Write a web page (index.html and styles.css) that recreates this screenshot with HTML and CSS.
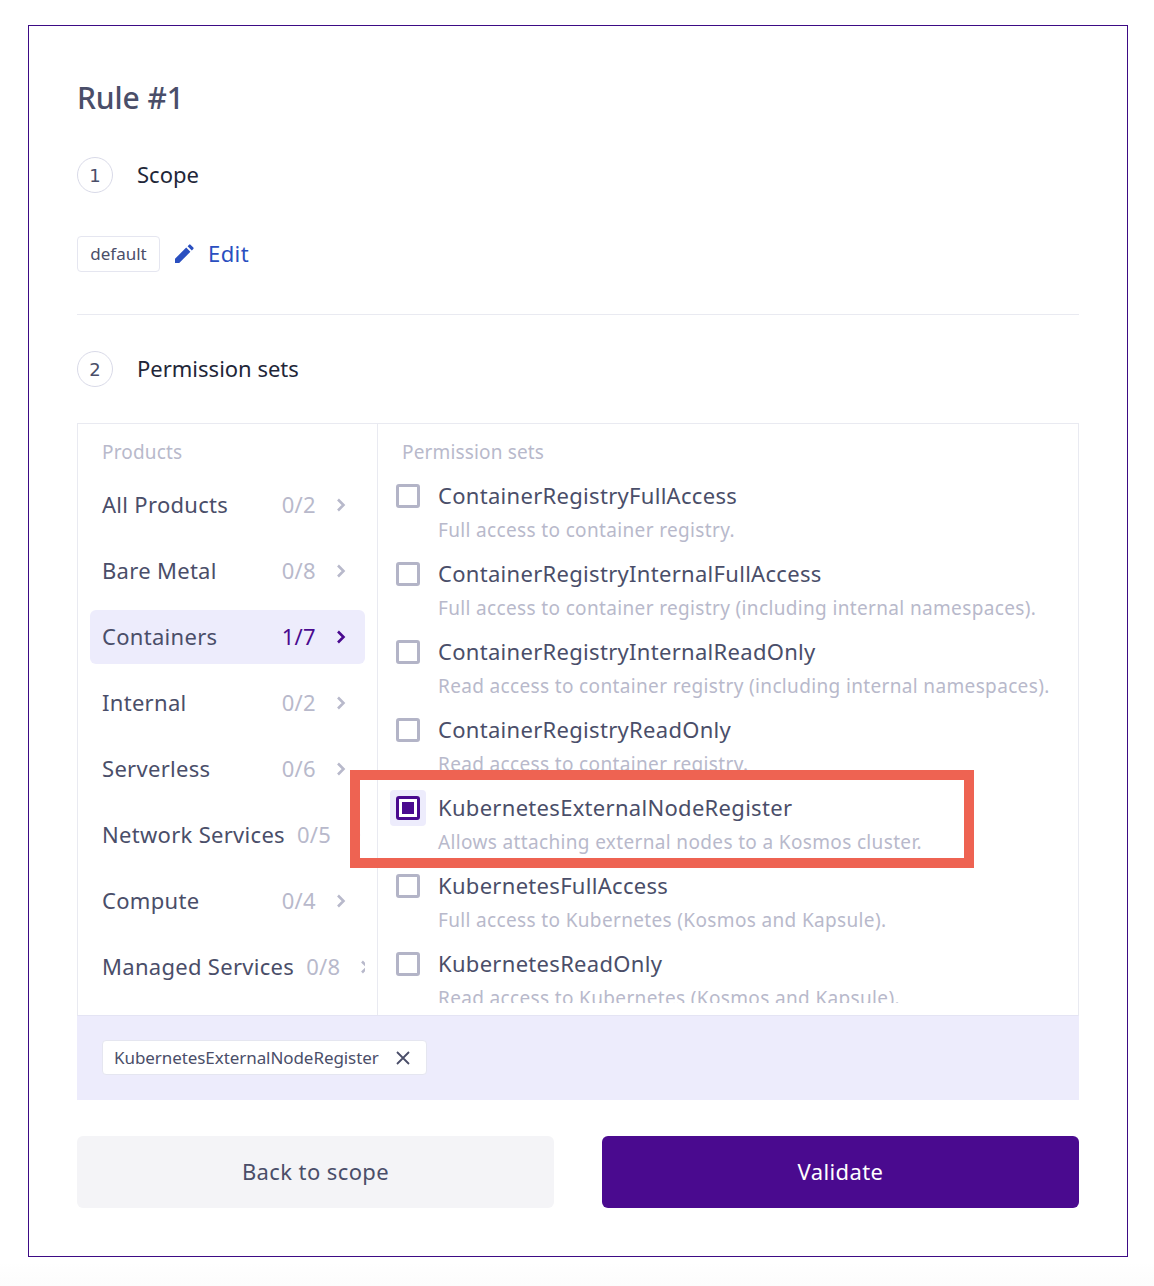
FILE: index.html
```html
<!DOCTYPE html>
<html lang="en">
  <head>
    <meta charset="UTF-8" />
    <title>Rule #1</title>
    <link rel="stylesheet" href="styles.css">
  </head>
  <body>
    <div class="rule-card">
      <h2 class="rule-title">Rule #1</h2>

      <div class="step step-first">
        <span class="step-num">1</span>
        <span class="step-label">Scope</span>
      </div>
      <div class="scope-row">
        <span class="tag">default</span>
        <a class="edit-link">
          <svg class="edit-icon" viewBox="0 0 20 20" width="20" height="20"><path fill="#2a4fc0" d="M1 19v-4.2L12.2 3.6l4.2 4.2L5.2 19H1zM13.6 2.2l1.5-1.5a1 1 0 0 1 1.4 0l2.8 2.8a1 1 0 0 1 0 1.4l-1.5 1.5-4.2-4.2z"/></svg>
          Edit
        </a>
      </div>

      <hr class="divider" />

      <div class="step">
        <span class="step-num">2</span>
        <span class="step-label">Permission sets</span>
      </div>

      <div class="picker">
        <div class="picker-cols">
          <div class="products">
            <div class="col-title">Products</div>
            <div class="product"><span class="product-name">All Products</span><span class="count">0/2</span><svg class="chev" viewBox="0 0 10 14" width="10" height="14"><path d="M2 1.5l5.5 5.5-5.5 5.5"/></svg></div>
            <div class="product"><span class="product-name">Bare Metal</span><span class="count">0/8</span><svg class="chev" viewBox="0 0 10 14" width="10" height="14"><path d="M2 1.5l5.5 5.5-5.5 5.5"/></svg></div>
            <div class="product active"><span class="product-name">Containers</span><span class="count">1/7</span><svg class="chev" viewBox="0 0 10 14" width="10" height="14"><path d="M2 1.5l5.5 5.5-5.5 5.5"/></svg></div>
            <div class="product"><span class="product-name">Internal</span><span class="count">0/2</span><svg class="chev" viewBox="0 0 10 14" width="10" height="14"><path d="M2 1.5l5.5 5.5-5.5 5.5"/></svg></div>
            <div class="product"><span class="product-name">Serverless</span><span class="count">0/6</span><svg class="chev" viewBox="0 0 10 14" width="10" height="14"><path d="M2 1.5l5.5 5.5-5.5 5.5"/></svg></div>
            <div class="product"><span class="product-name">Network Services</span><span class="count">0/5</span><svg class="chev" viewBox="0 0 10 14" width="10" height="14"><path d="M2 1.5l5.5 5.5-5.5 5.5"/></svg></div>
            <div class="product"><span class="product-name">Compute</span><span class="count">0/4</span><svg class="chev" viewBox="0 0 10 14" width="10" height="14"><path d="M2 1.5l5.5 5.5-5.5 5.5"/></svg></div>
            <div class="product"><span class="product-name">Managed Services</span><span class="count">0/8</span><svg class="chev" viewBox="0 0 10 14" width="10" height="14"><path d="M2 1.5l5.5 5.5-5.5 5.5"/></svg></div>
          </div>

          <div class="perms">
            <div class="col-title">Permission sets</div>
            <div class="perm-list">
              <div class="perm">
                <span class="check"></span>
                <div><div class="perm-name">ContainerRegistryFullAccess</div><div class="perm-desc">Full access to container registry.</div></div>
              </div>
              <div class="perm">
                <span class="check"></span>
                <div><div class="perm-name">ContainerRegistryInternalFullAccess</div><div class="perm-desc">Full access to container registry (including internal namespaces).</div></div>
              </div>
              <div class="perm">
                <span class="check"></span>
                <div><div class="perm-name">ContainerRegistryInternalReadOnly</div><div class="perm-desc">Read access to container registry (including internal namespaces).</div></div>
              </div>
              <div class="perm">
                <span class="check"></span>
                <div><div class="perm-name">ContainerRegistryReadOnly</div><div class="perm-desc">Read access to container registry.</div></div>
              </div>
              <div class="perm">
                <span class="check-halo"><span class="check checked"></span></span>
                <div><div class="perm-name">KubernetesExternalNodeRegister</div><div class="perm-desc">Allows attaching external nodes to a Kosmos cluster.</div></div>
              </div>
              <div class="perm">
                <span class="check"></span>
                <div><div class="perm-name">KubernetesFullAccess</div><div class="perm-desc">Full access to Kubernetes (Kosmos and Kapsule).</div></div>
              </div>
              <div class="perm">
                <span class="check"></span>
                <div><div class="perm-name">KubernetesReadOnly</div><div class="perm-desc">Read access to Kubernetes (Kosmos and Kapsule).</div></div>
              </div>
            </div>
          </div>
        </div>

        <div class="selected-bar">
          <span class="selected-chip">
            KubernetesExternalNodeRegister
            <svg viewBox="0 0 14 14" width="14" height="14"><path d="M1 1l12 12M13 1L1 13"/></svg>
          </span>
        </div>
      </div>

      <div class="actions">
        <button class="btn btn-back">Back to scope</button>
        <button class="btn btn-validate">Validate</button>
      </div>

      <div class="highlight"></div>
    </div>
  </body>
</html>
```

FILE: styles.css
```css
* {
  box-sizing: border-box;
}
body {
  margin: 0;
  padding: 25px 26px 29px 28px;
  background: linear-gradient(#fff 1262px, #fcfcfc 1286px);
  font-family: "Noto Sans", sans-serif;
  color: #4a4e69;
}
.rule-card {
  position: relative;
  height: 1232px;
  padding: 48px 48px 0;
  border: 1px solid #3d0b85;
}
.rule-title {
  margin: 0;
  font-size: 30px;
  line-height: 48px;
  font-weight: 500;
  letter-spacing: -0.1px;
}
.step {
  display: flex;
  align-items: center;
  gap: 24px;
  margin-top: 36px;
}
.step-first {
  margin-top: 35px;
}
.step-num {
  width: 36px;
  height: 36px;
  border: 1px solid #d9dae8;
  border-radius: 50%;
  display: flex;
  align-items: center;
  justify-content: center;
  font-family: "DejaVu Sans", sans-serif;
  font-size: 18px;
}
.step-label {
  font-size: 22px;
  padding-bottom: 2px;
  color: #222638;
}
.scope-row {
  display: flex;
  align-items: center;
  margin-top: 43px;
}
.tag {
  height: 36px;
  width: 83px;
  padding-bottom: 2px;
  border: 1px solid #e5e6f0;
  border-radius: 4px;
  display: flex;
  align-items: center;
  justify-content: center;
  font-size: 17px;
}
.edit-link {
  display: flex;
  align-items: center;
  gap: 14px;
  margin-left: 14px;
  padding-bottom: 2px;
  font-size: 22px;
  letter-spacing: 0.4px;
  color: #2a4fc0;
}
.edit-icon {
  margin-top: 2px;
}
.divider {
  margin: 42px 0 36px;
  border: 0;
  border-top: 1px solid #e9eaf1;
}
.step + .picker {
  margin-top: 36px;
}
.picker-cols {
  display: flex;
  height: 593px;
  border: 1px solid #e9eaf1;
  border-bottom-color: #e4e4f4;
}
.products {
  width: 300px;
  padding: 12px 12px 0;
  border-right: 1px solid #e9eaf1;
  overflow: hidden;
  flex-shrink: 0;
}
.col-title {
  font-size: 19px;
  line-height: 32px;
  letter-spacing: 0.15px;
  color: #b8b9cb;
}
.products .col-title {
  padding-left: 12px;
}
.product {
  display: flex;
  align-items: center;
  height: 54px;
  margin-top: 12px;
  padding: 0 19px 0 12px;
  border-radius: 6px;
  font-size: 22px;
  letter-spacing: 0.3px;
  white-space: nowrap;
  overflow: hidden;
}
.col-title + .product {
  margin-top: 10px;
}
.product-name {
  flex: 1;
  margin-bottom: 2px;
}
.count {
  margin-left: 12px;
  margin-bottom: 2px;
  color: #b8b9cb;
}
.chev {
  margin-left: 20px;
  flex-shrink: 0;
}
.chev path {
  fill: none;
  stroke: #b8b9cb;
  stroke-width: 2.6;
}
.product.active {
  background: #edecfc;
}
.active .count {
  color: #4a0a8f;
}
.active .chev path {
  stroke: #4a0a8f;
}
.perms {
  flex: 1;
  padding: 12px 0 0 24px;
  min-width: 0;
}
.perm-list {
  height: 525px;
  margin-top: 10px;
  margin-left: -24px;
  padding-left: 18px;
  overflow: hidden;
}
.perm {
  display: flex;
  gap: 18px;
  height: 78px;
}
.check {
  flex-shrink: 0;
  width: 24px;
  height: 24px;
  margin-top: 6px;
  border: 3px solid #b3b4c7;
  border-radius: 3px;
}
.check-halo {
  flex-shrink: 0;
  display: flex;
  justify-content: center;
  width: 36px;
  height: 36px;
  margin: 0 -6px;
  background: #edecfc;
  border-radius: 4px;
}
.check.checked {
  background: #4a0a8f;
  border-color: #4a0a8f;
  box-shadow: inset 0 0 0 3px #fff;
}
.perm-name {
  font-size: 22px;
  line-height: 34px;
  margin-bottom: 2px;
  letter-spacing: 0.3px;
}
.perm-desc {
  font-size: 19px;
  line-height: 32px;
  letter-spacing: 0.35px;
  color: #b8b9cb;
  white-space: nowrap;
}
.selected-bar {
  height: 84px;
  padding: 24px 25px 0;
  background: #edecfc;
}
.selected-chip {
  display: inline-flex;
  align-items: center;
  gap: 17px;
  height: 35px;
  padding: 0 16px 0 11px;
  background: #fff;
  border: 1px solid #e5e6f0;
  border-radius: 4px;
  font-size: 17px;
  letter-spacing: -0.07px;
}
.selected-chip path {
  stroke: #4a4e69;
  stroke-width: 1.8;
  fill: none;
}
.actions {
  display: flex;
  justify-content: space-between;
  margin-top: 36px;
}
.btn {
  width: 477px;
  height: 72px;
  padding: 0 0 2px;
  border: 0;
  border-radius: 6px;
  font-family: inherit;
  font-size: 22px;
  letter-spacing: 0.4px;
}
.btn-back {
  background: #f4f4f7;
  color: #4a4e69;
}
.btn-validate {
  background: #4a0a8f;
  color: #fff;
}
.highlight {
  position: absolute;
  left: 321px;
  top: 744px;
  width: 624px;
  height: 98px;
  border: 10px solid #ee6352;
}
```
